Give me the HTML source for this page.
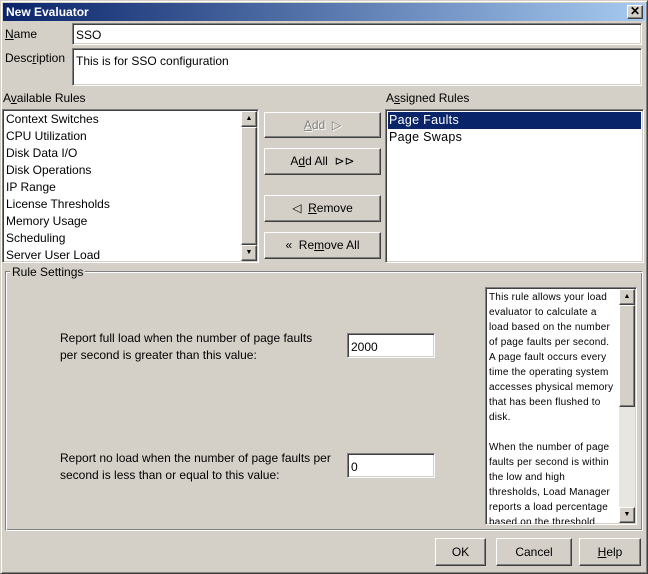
<!DOCTYPE html>
<html><head><style>
*{box-sizing:border-box;margin:0;padding:0}
body{width:648px;height:574px;overflow:hidden;background:#d4d0c8;font-family:"Liberation Sans",sans-serif;font-size:12px;color:#000;position:relative}
.a{position:absolute;white-space:nowrap}
.win{position:absolute;left:0;top:0;width:648px;height:574px;border:1px solid;border-color:#d4d0c8 #404040 #404040 #d4d0c8;box-shadow:inset 1px 1px #fff,inset -1px -1px #808080}
.title{position:absolute;left:3px;top:3px;width:642px;height:18px;background:linear-gradient(90deg,#0a246a,#a6caf0);color:#fff;font-weight:bold;font-size:12px;padding:2px 3px}
.sunk{position:absolute;background:#fff;border:1px solid;border-color:#808080 #fff #fff #808080;box-shadow:inset 1px 1px #404040,inset -1px -1px #d4d0c8}
.btn{position:absolute;background:#d4d0c8;border:1px solid;border-color:#fff #404040 #404040 #fff;box-shadow:inset -1px -1px #808080;text-align:center}
.sb{position:absolute;background:#e8e6e1}
.arr{position:absolute;width:16px;height:16px;background:#d4d0c8;border:1px solid;border-color:#fff #404040 #404040 #fff;box-shadow:inset -1px -1px #808080;font-size:7px;text-align:center;line-height:13px}
u{text-decoration:underline}
.ht{font-size:10px;line-height:15px;white-space:normal;letter-spacing:0.2px}
</style></head><body>
<div class="win"></div>
<div class="title">New Evaluator</div>
<div class="btn" style="left:627px;top:5px;width:16px;height:14px;font-size:12px;line-height:11px;font-weight:bold">✕</div>

<div class="a" style="left:5px;top:27px"><u>N</u>ame</div>
<div class="sunk" style="left:72px;top:23px;width:570px;height:22px"><span class="a" style="left:3px;top:4px">SSO</span></div>
<div class="a" style="left:5px;top:51px">Desc<u>r</u>iption</div>
<div class="sunk" style="left:72px;top:48px;width:570px;height:38px"><span class="a" style="left:3px;top:5px">This is for SSO configuration</span></div>

<div class="a" style="left:3px;top:91px">A<u>v</u>ailable Rules</div>
<div class="a" style="left:386px;top:91px">A<u>s</u>signed Rules</div>

<div class="sunk" style="left:2px;top:109px;width:257px;height:154px">
<div class="a" style="left:3px;top:1px;line-height:17px">Context Switches<br>CPU Utilization<br>Disk Data I/O<br>Disk Operations<br>IP Range<br>License Thresholds<br>Memory Usage<br>Scheduling<br>Server User Load</div>
<div class="sb" style="left:238px;top:1px;width:16px;height:150px"></div>
<div class="arr" style="left:238px;top:1px">▲</div>
<div class="btn" style="left:238px;top:17px;width:16px;height:118px"></div>
<div class="arr" style="left:238px;top:135px">▼</div>
</div>

<div class="btn" style="left:264px;top:112px;width:117px;height:26px;line-height:24px;color:#808080;text-shadow:1px 1px #fff"><u>A</u>dd &nbsp;▷</div>
<div class="btn" style="left:264px;top:148px;width:117px;height:27px;line-height:25px">A<u>d</u>d All &nbsp;⊳⊳</div>
<div class="btn" style="left:264px;top:195px;width:117px;height:27px;line-height:25px">◁ &nbsp;<u>R</u>emove</div>
<div class="btn" style="left:264px;top:232px;width:117px;height:27px;line-height:25px">« &nbsp;Re<u>m</u>ove All</div>

<div class="sunk" style="left:385px;top:109px;width:259px;height:154px">
<div class="a" style="left:2px;top:2px;width:253px;height:17px;background:#0a246a"></div>
<div class="a" style="left:3px;top:2px;line-height:17px;font-size:12.5px;letter-spacing:0.3px"><span style="color:#fff">Page Faults</span><br>Page Swaps</div>
</div>

<div class="a" style="left:5px;top:271px;width:638px;height:260px;border:1px solid;border-color:#808080 #fff #fff #808080;box-shadow:inset 1px 1px #fff,inset -1px -1px #808080"></div>
<div class="a" style="left:10px;top:265px;background:#d4d0c8;padding:0 2px">Rule Settings</div>

<div class="a" style="left:60px;top:330px;line-height:17px">Report full load when the number of page faults<br>per second is greater than this value:</div>
<div class="sunk" style="left:347px;top:333px;width:88px;height:25px"><span class="a" style="left:3px;top:6px">2000</span></div>
<div class="a" style="left:60px;top:450px;line-height:17px">Report no load when the number of page faults per<br>second is less than or equal to this value:</div>
<div class="sunk" style="left:347px;top:453px;width:88px;height:25px"><span class="a" style="left:3px;top:6px">0</span></div>

<div class="sunk" style="left:485px;top:287px;width:152px;height:238px;overflow:hidden">
<div class="a ht" style="left:3px;top:2px;width:128px">This rule allows your load evaluator to calculate a load based on the number of page faults per second. A page fault occurs every time the operating system accesses physical memory that has been flushed to disk.<br><br>When the number of page faults per second is within the low and high thresholds, Load Manager reports a load percentage based on the threshold</div>
<div class="sb" style="left:133px;top:1px;width:16px;height:234px"></div>
<div class="arr" style="left:133px;top:1px">▲</div>
<div class="btn" style="left:133px;top:17px;width:16px;height:102px"></div>
<div class="arr" style="left:133px;top:219px">▼</div>
</div>

<div class="btn" style="left:435px;top:538px;width:51px;height:28px;line-height:26px">OK</div>
<div class="btn" style="left:496px;top:538px;width:76px;height:28px;line-height:26px">Cancel</div>
<div class="btn" style="left:579px;top:538px;width:62px;height:28px;line-height:26px"><u>H</u>elp</div>
</body></html>
